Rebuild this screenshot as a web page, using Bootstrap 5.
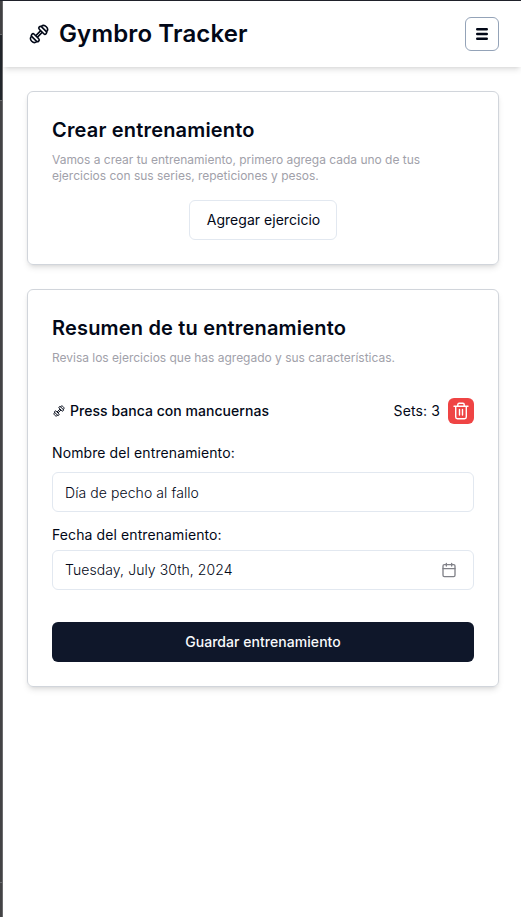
<!DOCTYPE html>
<html lang="es">
<head>
<meta charset="utf-8">
<meta name="viewport" content="width=device-width, initial-scale=1">
<title>Gymbro Tracker</title>
<link href="https://cdn.jsdelivr.net/npm/bootstrap@5.3.0/dist/css/bootstrap.min.css" rel="stylesheet">
<style>
body{font-family:Inter,"Liberation Sans",sans-serif;font-size:14px;line-height:20px;color:#020817;background:#fff;overflow:hidden}
.shell{height:917px;border-top:1px solid #20222b}
.edge{flex:none;width:3px;background:linear-gradient(#434345 0 33px,#68696b 33px 34px,#22262b 34px 99px,#68696b 99px 100px,#434345 100px 881px,#68696b 881px 882px,#434345 882px);border-right:1px solid #6a6a6c}
.topbar{height:66px;padding:0 22px 0 24px;box-shadow:0 4px 6px -1px rgba(0,0,0,.1),0 2px 4px -2px rgba(0,0,0,.1);background:#fff}
.brand{font-size:24px;line-height:32px;font-weight:600;letter-spacing:.14px}
.menu-btn{width:34px;height:34px;border:1px solid #94a3b8;border-radius:6px}
.page{padding:24px 22px 0 24px;gap:24px}
.panel{border:1px solid #d1d5db;border-radius:6px;padding:24px;box-shadow:0 4px 6px -1px rgba(0,0,0,.1),0 2px 4px -2px rgba(0,0,0,.1)}
.panel-a{height:174px}
.panel-b{height:398px}
.panel h2{font-size:20px;line-height:28px;font-weight:600;letter-spacing:.18px;margin:0}
.hint{font-size:12px;line-height:16px;letter-spacing:-.015px;color:#a1a1aa;margin:8px 0 0}
.add-btn{height:40px;width:148px;border:1px solid #e2e8f0;border-radius:6px;font-size:14px;line-height:20px;letter-spacing:.03px;color:#020817;padding:0 0 1px 1px;margin-top:16px}
.exercise{height:26px;margin-top:32px}
.exercise-name{letter-spacing:.04px}
.set-count{letter-spacing:.12px}
.del-btn{width:26px;height:26px;background:#ef4444;border-radius:6px}
.field-label{letter-spacing:.1px}
.name-label{margin:19px 0 9px}
.date-label{margin:13px 0 5px}
.field{height:40px;border:1px solid #e2e8f0;border-radius:6px;padding:0 12px;font-size:14px;font-weight:300;letter-spacing:.08px;color:#020817}
.name-field{padding-top:1px}
.date-field{padding-bottom:1px}
.field:focus{box-shadow:none}
.save-btn{height:40px;background:#0f172a;color:#f8fafc;border-radius:6px;font-size:14px;line-height:20px;font-weight:500;letter-spacing:.05px;margin-top:32px;padding:0 0 1px}
svg{display:block;flex:none}
</style>
<script src="https://cdn.jsdelivr.net/npm/bootstrap@5.3.0/dist/js/bootstrap.bundle.min.js"></script>
</head>
<body>
<svg width="0" height="0" class="d-none"><symbol id="dumbbell" viewBox="0 0 24 24"><g transform="rotate(-45 12 12)" fill="none" stroke="#020817" stroke-width="1.6" stroke-linejoin="round"><rect x="5.100" y="7.200" width="3.300" height="9.600" rx="1.600"/><rect x="15.600" y="7.200" width="3.300" height="9.600" rx="1.600"/><path d="M5.100 8.300C2.800 8.300 1.700 9.800 1.700 12s1.100 3.700 3.400 3.700M18.900 8.300c2.300 0 3.400 1.500 3.400 3.700s-1.100 3.700-3.400 3.700M8.400 10.900h7.200M8.400 13.100h7.200"/></g></symbol></svg>
<div class="shell d-flex">
<div class="edge"></div>
<div class="flex-grow-1">
<header class="topbar d-flex align-items-center justify-content-between">
<div class="d-flex align-items-center"><svg width="24" height="24"><use href="#dumbbell"/></svg><span class="brand ms-2">Gymbro Tracker</span></div>
<button class="menu-btn btn p-0 d-flex align-items-center justify-content-center" aria-label="Menú"><svg width="12" height="12" viewBox="0 0 12 12"><path d="M1.200 1.200h9.600M1.200 6h9.600M1.200 10.800h9.600" stroke="#020817" stroke-width="2.400" stroke-linecap="round"/></svg></button>
</header>
<main class="page d-flex flex-column">
<section class="panel panel-a">
<h2>Crear entrenamiento</h2>
<p class="hint">Vamos a crear tu entrenamiento, primero agrega cada uno de tus ejercicios con sus series, repeticiones y pesos.</p>
<div class="d-flex justify-content-center"><button class="btn add-btn">Agregar ejercicio</button></div>
</section>
<section class="panel panel-b">
<h2>Resumen de tu entrenamiento</h2>
<p class="hint">Revisa los ejercicios que has agregado y sus características.</p>
<div class="exercise d-flex align-items-center">
<svg width="14" height="14"><use href="#dumbbell"/></svg><span class="exercise-name fw-medium ms-1">Press banca con mancuernas</span>
<span class="set-count ms-auto me-2">Sets: 3</span>
<button class="btn del-btn p-0 border-0 d-flex align-items-center justify-content-center" aria-label="Eliminar"><svg width="18" height="18" viewBox="0 0 18 18" fill="none" stroke="#fff" stroke-width="1.400" stroke-linecap="round" stroke-linejoin="round"><path d="M2 4.200h14M5.800 4V2.600Q5.800 1.300 7.100 1.300h3.800Q12.200 1.300 12.200 2.600V4M3.700 4.500V15q0 1.700 1.700 1.700h7.200q1.700 0 1.700-1.700V4.500M7.500 7.500v5.500M10.500 7.500v5.500"/></svg></button>
</div>
<label class="d-block field-label name-label" for="nombre">Nombre del entrenamiento:</label>
<input id="nombre" class="form-control field name-field" value="Día de pecho al fallo">
<label class="d-block field-label date-label" for="fecha">Fecha del entrenamiento:</label>
<button id="fecha" class="btn field date-field w-100 d-flex align-items-center justify-content-between text-start"><span>Tuesday, July 30th, 2024</span><svg class="me-1" width="16" height="16" viewBox="0 0 24 24" fill="none" stroke="#808188" stroke-width="2" stroke-linecap="round" stroke-linejoin="round"><path d="M8 2v4M16 2v4M3 10h18"/><rect x="3" y="4" width="18" height="18" rx="2"/></svg></button>
<button class="btn save-btn w-100">Guardar entrenamiento</button>
</section>
</main>
</div>
</div>
</body>
</html>
